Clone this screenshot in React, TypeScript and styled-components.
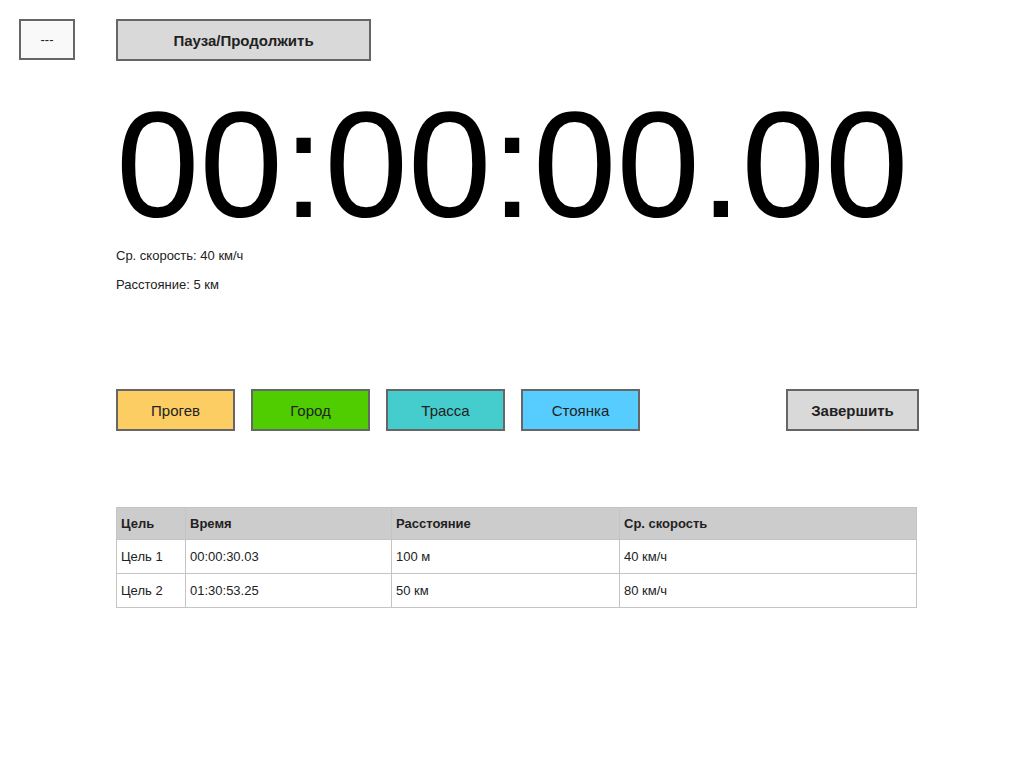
import React from "react";
import styled, { createGlobalStyle } from "styled-components";

const GlobalStyle = createGlobalStyle`
  body {
    margin: 0;
    background: #fff;
    font-family: "Liberation Sans", Arial, sans-serif;
    color: #222;
  }
`;

const Page = styled.div`
  width: 1020px;
  height: 757px;
  box-sizing: border-box;
  padding: 19px 0 0 19px;
  display: flex;
  gap: 41px;
`;

const SideButton = styled.button`
  width: 56px;
  height: 41px;
  box-sizing: border-box;
  background: #f9f9f9;
  border: 2px solid #666;
  font-family: "Liberation Sans", Arial, sans-serif;
  font-size: 13px;
  color: #222;
  padding: 0;
`;

const Main = styled.div`
  display: flex;
  flex-direction: column;
  width: 803px;
`;

const PauseButton = styled.button`
  width: 255px;
  height: 42px;
  box-sizing: border-box;
  background: #d9d9d9;
  border: 2px solid #666;
  font-family: "Liberation Sans", Arial, sans-serif;
  font-size: 15px;
  font-weight: bold;
  color: #222;
  padding: 0;
`;

const Timer = styled.div`
  font-family: "Liberation Sans", Arial, sans-serif;
  font-size: 150px;
  line-height: 130px;
  color: #000;
  margin: 39px 0 0 0;
  white-space: nowrap;
`;

const Stat = styled.div<{ $top: number }>`
  font-size: 13px;
  line-height: 14px;
  color: #222;
  margin-top: ${(p) => p.$top}px;
`;

const ModeRow = styled.div`
  display: flex;
  gap: 16px;
  margin-top: 97px;
`;

const ModeButton = styled.button<{ $bg: string }>`
  width: 119px;
  height: 42px;
  box-sizing: border-box;
  background: ${(p) => p.$bg};
  border: 2px solid #666;
  font-family: "Liberation Sans", Arial, sans-serif;
  font-size: 15px;
  color: #222;
  padding: 0;
`;

const FinishButton = styled(ModeButton)`
  width: 133px;
  margin-left: auto;
  font-weight: bold;
`;

const Table = styled.table`
  margin-top: 76px;
  width: 801px;
  border-collapse: collapse;
  font-family: "Liberation Sans", Arial, sans-serif;
  font-size: 13px;
  color: #222;
  th,
  td {
    text-align: left;
    padding: 0 4px;
    border: 1px solid #c4c4c4;
  }
  th {
    background: #cccccc;
    height: 31px;
    font-weight: bold;
  }
  td {
    height: 33px;
  }
`;

const modes = [
  { label: "Прогев", bg: "#fbcd63" },
  { label: "Город", bg: "#4fcd00" },
  { label: "Трасса", bg: "#45cccc" },
  { label: "Стоянка", bg: "#56ccff" },
];

const rows = [
  ["Цель 1", "00:00:30.03", "100 м", "40 км/ч"],
  ["Цель 2", "01:30:53.25", "50 км", "80 км/ч"],
];

export default function App() {
  return (
    <Page>
      <GlobalStyle />
      <SideButton>---</SideButton>
      <Main>
        <PauseButton>Пауза/Продолжить</PauseButton>
        <Timer>00:00:00.00</Timer>
        <Stat $top={19}>Ср. скорость: 40 км/ч</Stat>
        <Stat $top={15}>Расстояние: 5 км</Stat>
        <ModeRow>
          {modes.map((m) => (
            <ModeButton key={m.label} $bg={m.bg}>
              {m.label}
            </ModeButton>
          ))}
          <FinishButton $bg="#d9d9d9">Завершить</FinishButton>
        </ModeRow>
        <Table>
          <thead>
            <tr>
              <th style={{ width: 60 }}>Цель</th>
              <th style={{ width: 197 }}>Время</th>
              <th style={{ width: 219 }}>Расстояние</th>
              <th>Ср. скорость</th>
            </tr>
          </thead>
          <tbody>
            {rows.map((r) => (
              <tr key={r[0]}>
                {r.map((c, i) => (
                  <td key={i}>{c}</td>
                ))}
              </tr>
            ))}
          </tbody>
        </Table>
      </Main>
    </Page>
  );
}
